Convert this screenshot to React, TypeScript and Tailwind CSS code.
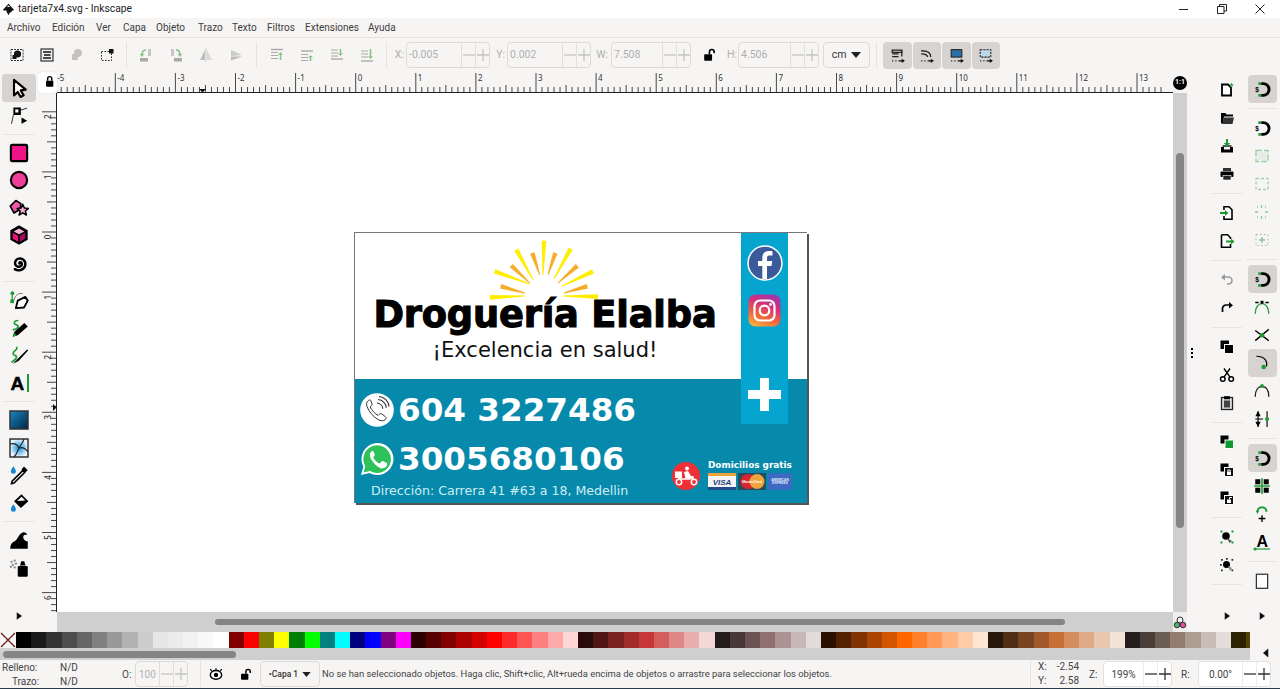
import type { ReactNode } from "react";

const ui = { fontFamily: 'Roboto, "Noto Sans", sans-serif' };
const card = { fontFamily: '"DejaVu Sans", Verdana, sans-serif' };

const swatches = [
  "#000000", "#1a1a1a", "#333333", "#4d4d4d", "#666666", "#808080", "#999999", "#b3b3b3", "#cccccc", "#e6e6e6", "#ececec", "#f2f2f2", "#f9f9f9", "#ffffff",
  "#800000", "#ff0000", "#808000", "#ffff00", "#008000", "#00ff00", "#008080", "#00ffff", "#000080", "#0000ff", "#800080", "#ff00ff",
  "#2b0000", "#550000", "#800000", "#aa0000", "#d40000", "#ff0000", "#ff2a2a", "#ff5555", "#ff8080", "#ffaaaa", "#ffd5d5",
  "#280b0b", "#501616", "#782121", "#a02c2c", "#c83737", "#d35f5f", "#de8787", "#e9afaf", "#f4d7d7",
  "#241c1c", "#483737", "#6c5353", "#916f6f", "#ac9393", "#c8b7b7", "#e3dbdb",
  "#2b1100", "#552200", "#803300", "#aa4400", "#d45500", "#ff6600", "#ff7f2a", "#ff9955", "#ffb380", "#ffccaa", "#ffe6d5",
  "#28170b", "#502d16", "#784421", "#a05a2c", "#c87137", "#d38d5f", "#deaa87", "#e9c6af", "#f4e3d7",
  "#241f1c", "#483e37", "#6c5d53", "#917c6f", "#ac9d93", "#c8beb7", "#e3dedb",
  "#2b2200",
];

const menus = [
  { label: "Archivo", cls: "w-[45px]" },
  { label: "Edición", cls: "w-[44px]" },
  { label: "Ver", cls: "w-[27px]" },
  { label: "Capa", cls: "w-[33px]" },
  { label: "Objeto", cls: "w-[42px]" },
  { label: "Trazo", cls: "w-[34px]" },
  { label: "Texto", cls: "w-[35px]" },
  { label: "Filtros", cls: "w-[38px]" },
  { label: "Extensiones", cls: "w-[63px]" },
  { label: "Ayuda", cls: "w-[40px]" },
];

function Ic({ children, size = 16 }: { children: ReactNode; size?: number }) {
  return (
    <svg width={size} height={size} viewBox="0 0 16 16" className="shrink-0">
      {children}
    </svg>
  );
}

const Arrow = () => (
  <Ic size={12}>
    <path d="M5 3l7 5-7 5z" fill="#111" />
  </Ic>
);

// top toolbar icons
const topIcons = [
  <Ic key="a"><rect x="2" y="2.500" width="12" height="11" fill="#fff" stroke="#333" strokeDasharray="2 1" /><circle cx="8.500" cy="7" r="3.600" fill="#111" /><rect x="3.500" y="8" width="4" height="4" fill="#111" /></Ic>,
  <Ic key="b"><rect x="2" y="2" width="12" height="12" fill="#eee" stroke="#333" strokeWidth="1.200" /><path d="M4 5h8M5 8h6.500M4 11h8" stroke="#111" strokeWidth="1.600" /></Ic>,
  <Ic key="c"><g opacity=".25"><rect x="3" y="7" width="6" height="6" fill="#333" /><circle cx="9" cy="6" r="4" fill="#333" /></g></Ic>,
  <Ic key="d"><rect x="2.500" y="4.500" width="10" height="9" fill="none" stroke="#222" strokeDasharray="1.500 1.500" /><rect x="10" y="2" width="4.500" height="4.500" fill="#111" /></Ic>,
  <Ic key="e"><g opacity=".6"><rect x="2" y="11" width="8" height="3.500" fill="#777" /><rect x="10" y="2" width="3" height="7" fill="#aaa" /><path d="M8 3C5 3 4 5 4 8" fill="none" stroke="#3a9d3a" strokeWidth="1.600" /><path d="M1.800 7h4.400L4 10z" fill="#3a9d3a" /></g></Ic>,
  <Ic key="f"><g opacity=".6"><rect x="6" y="11" width="8" height="3.500" fill="#777" /><rect x="3" y="2" width="3" height="7" fill="#aaa" /><path d="M8 3c3 0 4 2 4 5" fill="none" stroke="#3a9d3a" strokeWidth="1.600" /><path d="M9.800 7h4.400L12 10z" fill="#3a9d3a" /></g></Ic>,
  <Ic key="g"><g opacity=".45"><path d="M7 3v10L2 13z" fill="#777" /><path d="M9 3v10l5 0z" fill="#bbb" /><path d="M8 1v14" stroke="#999" /></g></Ic>,
  <Ic key="h"><g opacity=".45"><path d="M3 3l11 5-11 1z" fill="#999" /><path d="M3 9.500l11 0-11 4z" fill="#777" /></g></Ic>,
  <Ic key="i"><g opacity=".6" fill="none" stroke="#777"><path d="M2 2.500h12" strokeWidth="1.400" /><path d="M2 5.500h7M2 8.500h7M2 11.500h7" /><path d="M11.500 13V6" stroke="#3a9d3a" strokeWidth="1.500" /><path d="M9.500 8l2-2.500 2 2.500" stroke="#3a9d3a" /></g></Ic>,
  <Ic key="j"><g opacity=".6" fill="none" stroke="#777"><path d="M2 4h12" strokeWidth="1.400" /><path d="M2 7.500h7M2 10.500h7M2 13.500h7" /><path d="M11.500 14V9" stroke="#3a9d3a" strokeWidth="1.500" /><path d="M9.500 10.500l2-2 2 2" stroke="#3a9d3a" /></g></Ic>,
  <Ic key="k"><g opacity=".6" fill="none" stroke="#777"><path d="M2 12h12" strokeWidth="1.400" /><path d="M2 3h7M2 6h7M2 9h7" /><path d="M11.500 2v6" stroke="#3a9d3a" strokeWidth="1.500" /><path d="M9.500 6l2 2.500 2-2.500" stroke="#3a9d3a" /></g></Ic>,
  <Ic key="l"><g opacity=".6" fill="none" stroke="#777"><path d="M2 14h12" strokeWidth="1.400" /><path d="M2 4h7M2 7h7M2 10h7" /><path d="M11.500 2v9" stroke="#3a9d3a" strokeWidth="1.500" /><path d="M9.500 9l2 2.500 2-2.500" stroke="#3a9d3a" /></g></Ic>,
];

function Prefs({ kind }: { kind: number }) {
  return (
    <Ic size={17}>
      {kind === 0 && <path d="M3 3h9v2H3zM3 6.500h6M3 9h6" stroke="#222" strokeWidth="1.200" fill="none" />}
      {kind === 0 && <path d="M12 3v6" stroke="#222" strokeWidth="1.200" />}
      {kind === 1 && <path d="M3 3.500c5 0 9 1 9 6M3 6.500c3 0 6 .5 6 3" stroke="#222" strokeWidth="1.300" fill="none" />}
      {kind === 2 && <rect x="3" y="2.500" width="10" height="7" fill="#2a6fa8" stroke="#222" />}
      {kind === 3 && <rect x="3" y="2.500" width="10" height="7" fill="#bcd7e8" stroke="#222" strokeDasharray="2 1" />}
      <path d="M3 13h1M6 13h1M9 13h4" stroke="#111" strokeWidth="1.200" />
      <path d="M12 11l3 2-3 2z" fill="#111" />
    </Ic>
  );
}

function LockIcon({ open = false, size = 14 }: { open?: boolean; size?: number }) {
  return (
    <Ic size={size}>
      <rect x="2.500" y="7" width="9" height="7.500" fill="#000" rx="1" />
      {open ? (
        <path d="M8.500 7V4.500a2.700 2.700 0 0 1 5.400 0V6" fill="none" stroke="#000" strokeWidth="1.800" />
      ) : (
        <path d="M4.500 7V4.500a2.500 2.500 0 0 1 5 0V7" fill="none" stroke="#000" strokeWidth="1.800" />
      )}
    </Ic>
  );
}

// left tools
const T = 20;
const tools: (ReactNode | null)[] = [
  <Ic key="sel" size={T}><path d="M4 1.500v12.500l3-2.800 2.300 4 2.400-1.300-2.300-4 4-.6z" fill="#fff" stroke="#000" strokeWidth="1.700" strokeLinejoin="round" /></Ic>,
  <Ic key="node" size={T}><rect x="3.500" y="2" width="6" height="6" fill="#000" /><rect x="5" y="3.500" width="2.500" height="2.500" fill="#fff" /><path d="M3.500 8L2 15M9.500 4l5-1.500" stroke="#333" fill="none" strokeWidth=".8" /><path d="M10 10l4.500 2.500-4.500 2.500z" fill="#000" /></Ic>,
  null,
  <Ic key="rect" size={T}><rect x="1.500" y="1.500" width="13" height="13" rx="1" fill="#ed1285" stroke="#000" strokeWidth="1.700" /></Ic>,
  <Ic key="circ" size={T}><circle cx="8" cy="8" r="6.500" fill="#ee3f98" stroke="#000" strokeWidth="1.700" /></Ic>,
  <Ic key="star" size={T}><path d="M1 6.500L5.500 2 9.500 4.500 9 9 4 12z" fill="#ee5aa5" stroke="#000" strokeWidth="1.300" strokeLinejoin="round" /><path d="M11 5l1.300 3 3.200.3-2.400 2.100.8 3.200-2.900-1.700-2.900 1.700.8-3.200-2.400-2.100 3.200-.3z" fill="#f3a7cf" stroke="#000" strokeWidth="1.200" strokeLinejoin="round" /></Ic>,
  <Ic key="box" size={T}><path d="M8 1l6.300 3.500v7L8 15l-6.300-3.500v-7z" fill="#000" stroke="#000" strokeWidth="1.300" strokeLinejoin="round" /><path d="M8 2.800l4.300 2.300L8 7.400 3.700 5.100z" fill="#f7b4d4" /><path d="M3 6.200l4.300 2.400v4.700L3 10.900z" fill="#e7127f" /><path d="M13 6.200L8.700 8.600v4.700l4.300-2.400z" fill="#a30c5b" /></Ic>,
  <Ic key="spiral" size={T}><path d="M8.300 8.500c-.5-1.300 1.700-1.600 2 0 .3 2-2.400 3.300-4.200 2-2.300-1.700-1.200-5.400 1.600-6 3.300-.7 6 2 5.300 5.400-.8 3.400-5 5-8.400 3" fill="none" stroke="#000" strokeWidth="1.900" strokeLinecap="round" /></Ic>,
  null,
  <Ic key="pen" size={T}><rect x="1" y="7.500" width="3" height="3" fill="#1c9a35" /><circle cx="2.700" cy="2.500" r="1.500" fill="#1c9a35" /><path d="M2.600 3v5" stroke="#1c9a35" /><path d="M4 8C5 4 8 2 11 3" fill="none" stroke="#777" strokeWidth=".8" /><path d="M5.500 14.500l1.500-6 6-3 2 3-3 5.500z" fill="#fff" stroke="#000" strokeWidth="1.500" strokeLinejoin="round" /></Ic>,
  <Ic key="pencil" size={T}><path d="M7.500 2C4 2 3 4.500 6 5.500S7 9 3 9.500" fill="none" stroke="#1c9a35" strokeWidth="1.300" /><path d="M3 15l1.300-4 8-7 2.700 2.800-8 7z" fill="#000" /><path d="M3 15l1-3.300 2.300 2.200z" fill="#1c9a35" /></Ic>,
  <Ic key="call" size={T}><path d="M6 1.500C8 4 2 5 3.500 7.500c1 1.500 3 .5 2.500 2.500-.3 1.500-3 3-4 4" fill="none" stroke="#1c9a35" strokeWidth="1.300" /><path d="M6 12L14.500 3.500l.8.8L7.500 13z" fill="#000" /><path d="M3 15l3-3.500 1.500 1.500z" fill="#222" /></Ic>,
  <svg key="text" width={T} height={T} viewBox="0 0 20 20" className="shrink-0"><text x="1.500" y="16.500" fontSize="19" fontWeight="700" fontFamily="Liberation Sans, sans-serif" fill="#000" stroke="#000" strokeWidth=".5">A</text><rect x="18" y="1" width="2" height="18" fill="#1c9a35" /></svg>,
  null,
  <svg key="grad" width={T} height={T} viewBox="0 0 20 20" className="shrink-0"><defs><linearGradient id="tg" x1="0" y1="0" x2="1" y2="1"><stop offset="0" stopColor="#1788c8" /><stop offset="1" stopColor="#02223f" /></linearGradient></defs><rect x="1" y="1" width="18" height="18" fill="url(#tg)" stroke="#333" strokeWidth="1.500" /></svg>,
  <svg key="mesh" width={T} height={T} viewBox="0 0 20 20" className="shrink-0"><defs><radialGradient id="mg"><stop offset="0" stopColor="#0f8fd6" /><stop offset="1" stopColor="#e8f3fa" /></radialGradient></defs><rect x="1" y="1" width="18" height="18" fill="url(#mg)" stroke="#333" strokeWidth="1.500" /><path d="M10 10C8 6 6 5 1 6M10 10c2-4 4-5 5-9M10 10c4-1 6 0 9 4M10 10c-2 4-2 6-5 9" fill="none" stroke="#222" strokeWidth="1.100" /></svg>,
  <Ic key="drop" size={T}><path d="M3.500 1c1.200 1.700 2 2.800 2 4a2 2 0 0 1-4 0c0-1.200.8-2.300 2-4z" fill="#1b86d0" /><path d="M11 4.500L2.500 13l-.5 2 2-.5L12.500 6z" fill="#fff" stroke="#000" strokeWidth="1.300" /><path d="M10 3.500l2-2.300 3 3-2.300 2z" fill="#000" /></Ic>,
  <Ic key="fill" size={T}><path d="M3.500 9c1.200 1.700 2 2.800 2 4a2 2 0 0 1-4 0c0-1.200.8-2.300 2-4z" fill="#1b86d0" /><path d="M10 1l5.500 5.500-6 5.500L4 6.500z" fill="#000" /><path d="M6.500 6.300L10 3l3 3z" fill="#fff" /></Ic>,
  null,
  <Ic key="tweak" size={T}><path d="M1 15c0-3 1-5 3.500-6 2.500-1 3-6 6.500-7 2-.5 3 .5 3.500 2-2.500-.8-3.500.5-3 2.500.4 1.500 2 2.500 3.500 2.500v6z" fill="#000" /></Ic>,
  <Ic key="spray" size={T}><rect x="7" y="6.400" width="8" height="8.600" fill="#000" rx="1" /><path d="M8.800 6l1-3.500h2.400l1 3.500z" fill="#000" /><g fill="#888"><circle cx="2" cy="3" r=".9" /><circle cx="4.500" cy="2" r=".9" /><circle cx="5.500" cy="4.500" r=".9" /><circle cx="3" cy="5.500" r=".9" /><circle cx="1.500" cy="7" r=".9" /><circle cx="4.500" cy="7.500" r=".9" /></g></Ic>,
  null,
];

function Snap({ dim = false }: { dim?: boolean }) {
  return (
    <Ic size={21}>
      <g opacity={dim ? 0.4 : 1}>
        <path d="M7 3.500h1.500a4.500 4.500 0 0 1 0 9H7" fill="none" stroke="#000" strokeWidth="2.200" />
        <rect x="4.800" y="2.500" width="2" height="2" fill="#1c9a35" />
        <rect x="4.800" y="11.500" width="2" height="2" fill="#1c9a35" />
        <text x="2.500" y="10.200" fontSize="5" fontWeight="700" fill="#000" fontFamily="Liberation Sans, sans-serif">$</text>
      </g>
    </Ic>
  );
}

const docLeft: (ReactNode | null)[] = [
  <Ic key="new"><path d="M3 2.500h6l3 3v8H3z" fill="#fff" stroke="#000" strokeWidth="1.800" /><path d="M12.500 .5l.7 1.500 1.600.3-1.200 1 .3 1.700-1.400-.8-1.400.8.3-1.700-1.200-1 1.600-.3z" fill="#2fb24c" /></Ic>,
  <Ic key="open"><path d="M2 3h4.500l1 1.500H14v2H5l-1 7H2z" fill="#000" /><path d="M4.800 7.500H15l-1.500 6.500H3.500z" fill="#333" /></Ic>,
  <Ic key="save"><path d="M2 9h3v2.500h6V9h3v5.500H2z" fill="#000" /><path d="M3.500 7h9v2h-9z" fill="#555" /><path d="M7 1h2v4h2.300L8 8.500 4.700 5H7z" fill="#1c9a35" /></Ic>,
  <Ic key="print"><rect x="4" y="2" width="8" height="3" fill="#333" /><rect x="1.500" y="5.500" width="13" height="5.500" fill="#000" rx="1" /><rect x="4" y="9.500" width="8" height="4.500" fill="#222" stroke="#fff" strokeWidth=".6" /></Ic>,
  null,
  <Ic key="imp"><path d="M5 5V1.800h5l3 3v9.400H5V11" fill="#fff" stroke="#000" strokeWidth="1.600" /><path d="M1 7h5V5l3.500 3L6 11V9H1z" fill="#1c9a35" /></Ic>,
  <Ic key="exp"><path d="M2.500 1.800h6l3 3V6M11.500 11v3.200h-9V1.800" fill="#fff" stroke="#000" strokeWidth="1.600" /><path d="M7 7.500h5V5.500l3.500 3-3.500 3V9.500H7z" fill="#1c9a35" /></Ic>,
  null,
  <Ic key="undo"><path d="M5 5h4.500a3.500 3.500 0 0 1 0 7H8" fill="none" stroke="#999" strokeWidth="1.600" /><path d="M6 2L2 5.200 6 8.500z" fill="#999" /></Ic>,
  <Ic key="redo"><path d="M11 5H7a3.500 3.500 0 0 0-3.500 3.500V12" fill="none" stroke="#000" strokeWidth="1.700" /><path d="M10 2l4 3.200-4 3.300z" fill="#000" /></Ic>,
  null,
  <Ic key="dup"><rect x="1.500" y="1.500" width="8.500" height="8.500" fill="#000" /><rect x="5.500" y="5.500" width="9" height="9" fill="#000" stroke="#fff" /></Ic>,
  <Ic key="cut"><circle cx="3.800" cy="12" r="2.300" fill="#fff" stroke="#000" strokeWidth="1.500" /><circle cx="12.200" cy="12" r="2.300" fill="#fff" stroke="#000" strokeWidth="1.500" /><path d="M5 10.200L11 1.500M11 10.200L5 1.500" stroke="#000" strokeWidth="1.400" /></Ic>,
  <Ic key="paste"><rect x="2.500" y="2.500" width="11" height="12" fill="#ddd" stroke="#222" strokeWidth="1.300" /><rect x="5" y="1.200" width="6" height="3" fill="#000" /><rect x="5" y="5.500" width="6" height="7" fill="#444" /></Ic>,
  null,
  <Ic key="clone"><rect x="1.500" y="1.500" width="8" height="8" fill="#000" /><rect x="6" y="6" width="8.500" height="8.500" fill="#0f9a2f" stroke="#fff" /></Ic>,
  <Ic key="unlink"><rect x="1.500" y="1.500" width="8" height="8" fill="#000" /><rect x="5.500" y="5.500" width="9" height="9" fill="#111" stroke="#fff" /><rect x="8" y="9.500" width="4" height="3.500" fill="#fff" /><path d="M8.800 9.500V8h2.400v1.500" stroke="#fff" fill="none" /></Ic>,
  <Ic key="relink"><rect x="1.500" y="1.500" width="8" height="8" fill="#000" /><rect x="5.500" y="5.500" width="9" height="9" fill="#111" stroke="#fff" /><rect x="8" y="9.500" width="4" height="3.500" fill="#fff" /><path d="M10.500 9.500V7.500h2.400" stroke="#fff" fill="none" /></Ic>,
  null,
  <Ic key="grp"><circle cx="7" cy="7" r="3.800" fill="#000" /><path d="M8 9l5 3-2.500 2z" fill="#555" /><g fill="#1c9a35"><rect x="1.500" y="1.500" width="2" height="2" /><rect x="12.500" y="1.500" width="2" height="2" /><rect x="1.500" y="12.500" width="2" height="2" /><rect x="12.500" y="12.500" width="2" height="2" /></g></Ic>,
  <Ic key="ungrp"><circle cx="7.500" cy="7.500" r="3.500" fill="#000" /><path d="M9 9l4 2-2 3z" fill="#888" /><g fill="#222"><rect x="2" y="2" width="1.700" height="1.700" /><rect x="12.500" y="2" width="1.700" height="1.700" /><rect x="2" y="12.500" width="1.700" height="1.700" /><rect x="12.500" y="12.500" width="1.700" height="1.700" /><rect x="7" y="1" width="1.700" height="1.700" /><rect x="1" y="7" width="1.700" height="1.700" /></g></Ic>,
  null,
];

const dash = { fill: "none", stroke: "#2e9c46", strokeWidth: 1.3 };
const snapRight: ({ el: ReactNode; on?: boolean } | null)[] = [
  { el: <Snap />, on: true },
  null,
  { el: <Snap /> },
  { el: <Ic><rect x="2" y="2.500" width="12" height="11" {...dash} strokeDasharray="6 2" opacity=".45" /><rect x="3.500" y="4" width="9" height="8" fill="#2e9c46" opacity=".08" /></Ic> },
  { el: <Ic><rect x="2" y="2.500" width="12" height="11" {...dash} strokeDasharray="3 2" opacity=".4" /></Ic> },
  { el: <Ic><path d="M7.500 1v3M7.500 12v3M1 8h3M11 8h3M3 3h1M11 3h1M3 13h1M11 13h1" {...dash} opacity=".5" /></Ic> },
  { el: <Ic><rect x="2" y="2.500" width="12" height="11" fill="none" stroke="#888" strokeDasharray="2 2" opacity=".5" /><path d="M8 5v6M5 8h6" {...dash} opacity=".55" /></Ic> },
  null,
  { el: <Snap />, on: true },
  { el: <Ic size={18}><path d="M2 14C2 8 5 5 8 5s6 3 6 9" fill="none" stroke="#2e9c46" strokeWidth="1.300" /><rect x="6.700" y="2.500" width="2.600" height="2.600" fill="#000" /><path d="M2 4h3M14 4h-3" stroke="#000" strokeWidth="1.500" /></Ic> },
  { el: <Ic size={18}><path d="M2 13L14 3M2 4l12 9" stroke="#000" strokeWidth="1.200" /><circle cx="8" cy="8.300" r="2" fill="#1c9a35" /></Ic> },
  { el: <Ic size={18}><path d="M3 2c7 0 10 4 9 9" fill="none" stroke="#000" strokeWidth="1.100" /><circle cx="9.500" cy="11.500" r="2" fill="#1c9a35" /></Ic>, on: true },
  { el: <Ic size={18}><path d="M2 13C2 7 4.500 4 8 4s6 3 6 9" fill="none" stroke="#222" strokeWidth="1.200" /><circle cx="8" cy="3.500" r="1.700" fill="#1c9a35" /></Ic> },
  { el: <Ic size={18}><path d="M4.500 1v14M12.500 1v14" stroke="#000" strokeWidth="1" /><path d="M2 8h7M3 5l1.500-3L6 5zM3 11l1.500 3L6 11z" fill="#000" stroke="#000" /><circle cx="12.500" cy="8" r="1.800" fill="#1c9a35" /></Ic> },
  null,
  { el: <Snap />, on: true },
  { el: <Ic size={18}><g fill="#000"><rect x="2" y="2" width="4.500" height="4.500" /><rect x="9.500" y="2" width="4.500" height="4.500" /><rect x="2" y="9.500" width="4.500" height="4.500" /><rect x="9.500" y="9.500" width="4.500" height="4.500" /></g><path d="M8 1v14M1 8h14" stroke="#1c9a35" strokeWidth="1.400" /></Ic> },
  { el: <Ic size={18}><path d="M8 9v6M5 12h6" stroke="#000" strokeWidth="1.200" /><path d="M4 6a4 4 0 0 1 8 0" fill="none" stroke="#1c9a35" strokeWidth="1.800" /><path d="M2.500 5h3l-1.500 3z" fill="#1c9a35" /></Ic> },
  { el: <svg width="20" height="20" viewBox="0 0 20 20" className="shrink-0"><text x="4.500" y="14.500" fontSize="16" fontWeight="700" fontFamily="Liberation Sans, sans-serif" fill="#000">A</text><path d="M2 17h16" stroke="#1c9a35" strokeWidth="1.200" /><circle cx="3" cy="17" r="1.600" fill="#1c9a35" /></svg> },
  null,
  { el: <Ic size={18}><rect x="3" y="2" width="10" height="12.500" fill="#fff" stroke="#333" strokeWidth="1.100" /></Ic> },
];

function Sep() {
  return <div className="h-px w-full bg-[#e6e4e2]" />;
}

function Mini({ dark = false }: { dark?: boolean }) {
  const c = dark ? "#333" : "#c4c3c1";
  return (
    <div className="flex h-full shrink-0 items-center">
      <div className={`flex h-full w-[14px] items-center justify-center border-l ${dark ? "border-[#ececec]" : "border-[#e1dfdd]"}`}>
        <svg width="12" height="12" viewBox="0 0 12 12"><path d="M0 6h12" stroke={c} strokeWidth="1.300" /></svg>
      </div>
      <div className={`flex h-full w-[14px] items-center justify-center border-l ${dark ? "border-[#ececec]" : "border-[#e1dfdd]"}`}>
        <svg width="12" height="12" viewBox="0 0 12 12"><path d="M0 6h12M6 0v12" stroke={c} strokeWidth="1.300" /></svg>
      </div>
    </div>
  );
}

function Spin({ value, cls }: { value: string; cls: string }) {
  return (
    <div className={`flex h-[26px] shrink-0 items-center rounded-[4px] border border-[#dddbd9] bg-[#f6f5f4] ${cls}`}>
      <span className="flex-1 pl-[2px] text-[10.5px] text-[#b0afae]">{value}</span>
      <Mini />
    </div>
  );
}

function HRuler() {
  const ticks: ReactNode[] = [];
  const w = 1116;
  const labels: ReactNode[] = [];
  for (let i = -50; i <= 140; i++) {
    const x = 298.7 + i * 6.01;
    if (x < -3 || x > w - 6) continue;
    const major = i % 10 === 0;
    const mid = i % 5 === 0;
    const top = major ? 1 : mid ? 13 : 15;
    ticks.push(<line key={i} x1={x} x2={x} y1={top} y2={20} stroke="#333" strokeWidth=".9" />);
    if (major) {
      labels.push(
        <text key={`l${i}`} x={x + 2} y={9} fontSize="8" fill="#333" fontFamily="Noto Sans, sans-serif">
          {i / 10}
        </text>,
      );
    }
  }
  return (
    <svg width={w} height={21} className="shrink-0">
      {ticks}
      {labels}
      <line x1="0" x2={w} y1="20.500" y2="20.500" stroke="#222" />
      <path d="M142 17h7l-3.500 3.500z" fill="#111" />
    </svg>
  );
}

function VRuler() {
  const ticks: ReactNode[] = [];
  const labels: ReactNode[] = [];
  for (let i = -20; i <= 85; i++) {
    const y = 139 + i * 6.01;
    if (y < 0 || y > 519) continue;
    const major = i % 10 === 0;
    const mid = i % 5 === 0;
    const left = major ? 4 : mid ? 9 : 13;
    ticks.push(<line key={i} x1={left} x2={19} y1={y} y2={y} stroke="#333" strokeWidth=".9" />);
    if (major) {
      const v = Math.abs(i / 10);
      labels.push(
        <text key={`l${i}`} x={11} y={y + 7} fontSize="8" fontWeight="500" textAnchor="middle" fill="#333" fontFamily="Noto Sans, sans-serif" transform={`rotate(-90 11 ${y + 5})`}>
          {v}
        </text>,
      );
    }
  }
  return (
    <svg width={19} height={519} className="shrink-0">
      {ticks}
      {labels}
      <line x1="18.500" x2="18.500" y1="0" y2="519" stroke="#222" />
      <path d="M15 311v7l3.500-3.500z" fill="#111" />
    </svg>
  );
}

const rays = [
  { a: [588, 48], b: [585, 150], c: "#ffee00" },
  { a: [505, 75], b: [555, 165], c: "#ffee00" },
  { a: [668, 72], b: [618, 162], c: "#ffee00" },
  { a: [440, 140], b: [545, 178], c: "#ffee00" },
  { a: [735, 140], b: [640, 185], c: "#ffee00" },
  { a: [425, 218], b: [530, 214], c: "#ffee00" },
  { a: [750, 216], b: [645, 214], c: "#ffee00" },
  { a: [553, 85], b: [575, 150], c: "#f5ad27" },
  { a: [622, 85], b: [600, 150], c: "#f5ad27" },
  { a: [490, 123], b: [545, 175], c: "#f5ad27" },
  { a: [688, 123], b: [630, 175], c: "#f5ad27" },
  { a: [458, 185], b: [530, 205], c: "#f5ad27" },
  { a: [718, 185], b: [648, 205], c: "#f5ad27" },
];

function rayPoints(a: number[], b: number[]) {
  const dx = b[0] - a[0];
  const dy = b[1] - a[1];
  const len = Math.hypot(dx, dy);
  const nx = -dy / len;
  const ny = dx / len;
  return [
    [a[0] + nx * 7, a[1] + ny * 7],
    [a[0] - nx * 7, a[1] - ny * 7],
    [b[0] - nx * 1.500, b[1] - ny * 1.500],
    [b[0] + nx * 1.500, b[1] + ny * 1.500],
  ]
    .map((p) => p.join(","))
    .join(" ");
}

function Sun() {
  return (
    <svg width="114" height="64" viewBox="420 40 342 192" className="shrink-0">
      {rays.map((r, i) => (
        <polygon key={i} points={rayPoints(r.a, r.b)} fill={r.c} />
      ))}
    </svg>
  );
}

function Facebook() {
  return (
    <svg width="36" height="36" viewBox="0 0 36 36" className="shrink-0">
      <circle cx="18" cy="18" r="17" fill="#3b5a9a" stroke="#fff" strokeWidth="1.500" />
      <path d="M20 34V21h4.500l.7-5H20v-3c0-1.500.5-2.500 2.500-2.500h3V6.200C24.500 6 23 6 22 6c-4 0-6.700 2.400-6.700 6.700V16H11v5h4.300v13z" fill="#fff" />
    </svg>
  );
}

function Instagram() {
  return (
    <svg width="33" height="33" viewBox="0 0 33 33" className="shrink-0">
      <defs>
        <linearGradient id="ig" x1="0.200" y1="1" x2="0.600" y2="0">
          <stop offset="0" stopColor="#fbb03b" />
          <stop offset="0.350" stopColor="#f0643c" />
          <stop offset="0.700" stopColor="#d62f7d" />
          <stop offset="1" stopColor="#a336a5" />
        </linearGradient>
      </defs>
      <rect x="0.500" y="0.500" width="32" height="32" rx="7" fill="url(#ig)" />
      <rect x="6.500" y="6.500" width="20" height="20" rx="5.500" fill="none" stroke="#fff" strokeWidth="2.200" />
      <circle cx="16.500" cy="16.500" r="4.800" fill="none" stroke="#fff" strokeWidth="2.200" />
      <circle cx="22.500" cy="10.500" r="1.400" fill="#fff" />
    </svg>
  );
}

function PhoneBadge() {
  return (
    <svg width="34" height="34" viewBox="0 0 34 34" className="shrink-0">
      <circle cx="17" cy="17" r="16.800" fill="#fff" />
      <path d="M8.500 7.500c-2 1.500-2.500 3.500-1.500 6 2 5.500 6 10 11 13 2.500 1.500 5 1.800 7 .3 1.200-1 1.500-2 .5-3l-3.500-2.700c-1-.7-2-.6-2.800.3l-1 1c-3.500-1.700-6.500-5-8-8.500l1.200-1c.9-.8.9-1.700.3-2.700L10.800 7.500c-.7-.8-1.500-.7-2.300 0z" fill="#fff" stroke="#333" strokeWidth="1" />
      <path d="M17 10c3 .2 5.500 2.700 5.800 5.800M18 6.500c4.500.3 8 3.800 8.300 8.300M19 3.500c5.200.4 9.700 4.600 10 10" fill="none" stroke="#333" strokeWidth="1.100" />
    </svg>
  );
}

function WhatsApp() {
  return (
    <svg width="34" height="34" viewBox="0 0 34 34" className="shrink-0">
      <path d="M1 33l2.400-8.300A16 16 0 1 1 9.600 31z" fill="#fff" />
      <path d="M3.500 30.500l1.800-6.200A13.800 13.800 0 1 1 10 29z" fill="#2fc15a" />
      <path d="M12.500 9c-1 .1-2.600 1.500-2.600 4 0 2.600 1.900 5.200 2.200 5.600.3.400 3.700 6 9.100 8 1.300 0 .9-.1 2.500-.5 1.500-.3 3-1.500 3.300-2.800.2-.9.2-1.800 0-2-.1-.3-3.900-2.200-4.300-2.300-.4-.1-.7-.2-1 .2l-1.600 1.900c-.3.400-.6.400-1 .2-1.800-.9-3-1.600-4.200-3.300-.8-1.100-1.300-1.900-1.500-2.300-.2-.4 0-.6.200-.8l1-1.300c.2-.3.3-.6.100-1l-1.300-3.300c-.4-.7-.6-.5-.9-.5z" fill="#fff" />
    </svg>
  );
}

function Delivery() {
  return (
    <svg width="28" height="28" viewBox="0 0 28 28" className="shrink-0">
      <circle cx="14" cy="14" r="14" fill="#ee3036" />
      <rect x="3" y="9.500" width="7" height="6.500" fill="#fff" />
      <circle cx="15" cy="6.500" r="2" fill="#fff" />
      <path d="M12 10l4-1 3 5 3 .5-.5 2h-8z" fill="#fff" />
      <circle cx="7" cy="20" r="2.700" fill="none" stroke="#fff" strokeWidth="1.500" />
      <circle cx="22" cy="20" r="2.700" fill="none" stroke="#fff" strokeWidth="1.500" />
      <path d="M6 17h12l2-2 1 2" fill="none" stroke="#fff" strokeWidth="1.500" />
    </svg>
  );
}

function Visa() {
  return (
    <svg width="28" height="17" viewBox="0 0 28 17" className="shrink-0">
      <rect width="28" height="17" fill="#f4f4f4" />
      <rect width="28" height="3" fill="#e8a33a" />
      <rect y="14" width="28" height="3" fill="#1f4c86" />
      <text x="14" y="12" textAnchor="middle" fontSize="8" fontWeight="700" fontStyle="italic" fill="#1f3f7a" fontFamily="Liberation Sans, sans-serif">VISA</text>
    </svg>
  );
}

function Master() {
  return (
    <svg width="28" height="17" viewBox="0 0 28 17" className="shrink-0">
      <rect width="28" height="17" fill="#2b4a5e" />
      <circle cx="10" cy="8.500" r="7.500" fill="#d9252f" />
      <circle cx="19" cy="8.500" r="7.500" fill="#f0a33a" />
      <text x="14" y="10" textAnchor="middle" fontSize="3.600" fontWeight="700" fontStyle="italic" fill="#fff" fontFamily="Liberation Sans, sans-serif">MasterCard</text>
    </svg>
  );
}

function Amex() {
  return (
    <svg width="24" height="17" viewBox="0 0 25 17" className="shrink-0">
      <rect width="25" height="17" fill="#3f6ac4" />
      <text x="12.500" y="7.500" textAnchor="middle" fontSize="3.400" fontWeight="700" fill="#e4ecfa" fontFamily="Liberation Sans, sans-serif">AMERICAN</text>
      <text x="12.500" y="11.500" textAnchor="middle" fontSize="3.400" fontWeight="700" fill="#e4ecfa" fontFamily="Liberation Sans, sans-serif">EXPRESS</text>
    </svg>
  );
}

function BusinessCard() {
  return (
    <div className="relative flex h-[271px] w-[453px] flex-col border-l border-t border-[#777] shadow-[2px_2px_0_#555]" style={card}>
      <div className="flex h-[146px] w-[380px] shrink-0 flex-col items-center bg-white pt-[5px]">
        <Sun />
        <div className="-mt-[6px] text-[36.8px] leading-[38px] font-bold tracking-[-0.2px] whitespace-nowrap text-black [-webkit-text-stroke:1.1px_black]">
          Droguería Elalba
        </div>
        <div className="mt-[3px] text-[21px] leading-[26px] whitespace-nowrap text-[#111]">¡Excelencia en salud!</div>
      </div>
      <div className="absolute top-0 right-0 left-[380px] h-[146px] bg-white" />
      <div className="flex flex-1 justify-between bg-[#0789ab] pr-[15px] pl-[5px]">
        <div className="flex flex-col">
          <div className="mt-[14px] flex h-[34px] items-center gap-[4px]">
            <PhoneBadge />
            <span className="text-[32.6px] leading-none font-bold whitespace-nowrap text-white">604 3227486</span>
          </div>
          <div className="mt-[15px] flex h-[34px] items-center gap-[4px]">
            <WhatsApp />
            <span className="text-[32.6px] leading-none font-bold whitespace-nowrap text-white">3005680106</span>
          </div>
          <div className="mt-[6px] pl-[11px] text-[12.6px] leading-[18px] whitespace-nowrap text-[#cdeef6]">
            Dirección: Carrera 41 #63 a 18, Medellin
          </div>
        </div>
        <div className="flex items-end gap-[8px] pb-[13px]">
          <Delivery />
          <div className="flex flex-col items-start">
            <div className="text-[8.9px] leading-[14px] font-bold whitespace-nowrap text-white">Domicilios gratis</div>
            <div className="mt-[1px] flex gap-[2px]">
              <Visa />
              <Master />
              <Amex />
            </div>
          </div>
        </div>
      </div>
      <div className="absolute top-0 left-[386px] flex h-[191px] w-[47px] flex-col items-center bg-[#05a5cf] pt-[12px]">
        <Facebook />
        <div className="mt-[13px]">
          <Instagram />
        </div>
        <svg width="33" height="33" viewBox="0 0 33 33" className="mt-[51px] shrink-0">
          <path d="M12 0h9v12h12v9H21v12h-9V21H0v-9h12z" fill="#fff" />
        </svg>
      </div>
    </div>
  );
}

export default function App() {
  return (
    <div className="flex h-[689px] w-[1280px] flex-col overflow-hidden bg-[#f6f5f4]" style={ui}>
      {/* title bar */}
      <div className="flex h-[18px] shrink-0 items-center bg-white pl-[2px] text-[10.3px] text-[#222]">
        <svg width="13" height="13" viewBox="0 0 16 16" className="shrink-0">
          <path d="M8 1L1 8.500l2.500 1 1.500-1 1 3 2 3.500 1.500-3 2-1 1-1.500 2.500-1z" fill="#111" />
          <path d="M6 5h4L8 3z" fill="#fff" />
        </svg>
        <span className="ml-[3px]">tarjeta7x4.svg - Inkscape</span>
        <div className="ml-auto flex items-center">
          <svg width="12" height="12" viewBox="0 0 12 12" className="mr-[26px]"><path d="M1 6.500h9" stroke="#222" /></svg>
          <svg width="12" height="12" viewBox="0 0 12 12" className="mr-[26px]"><path d="M1.500 3.500h6.500v7H1.500zM3.500 3.500v-2h7v6.500H8" fill="none" stroke="#222" /></svg>
          <svg width="12" height="12" viewBox="0 0 12 12" className="mr-[14px]"><path d="M1.500 1.500l9 9M10.500 1.500l-9 9" stroke="#222" /></svg>
        </div>
      </div>

      {/* menu */}
      <div className="flex h-[20px] shrink-0 items-center border-b border-[#e4e2e0] pl-[7px] text-[10px] text-[#3c3c3c]">
        {menus.map((m) => (
          <span key={m.label} className={m.cls}>
            {m.label}
          </span>
        ))}
      </div>

      {/* command bar */}
      <div className="flex h-[34px] shrink-0 items-center pl-[2px] text-[10.5px]">
        {topIcons.slice(0, 4).map((ic, i) => (
          <div key={i} className="flex w-[30px] justify-center">{ic}</div>
        ))}
        <div className="mx-[4px] h-[26px] w-px shrink-0 bg-[#e6e4e2]" />
        {topIcons.slice(4, 8).map((ic, i) => (
          <div key={i} className="flex w-[30px] justify-center">{ic}</div>
        ))}
        <div className="mx-[5px] h-[26px] w-px shrink-0 bg-[#e6e4e2]" />
        {topIcons.slice(8, 12).map((ic, i) => (
          <div key={i} className="flex w-[30px] justify-center">{ic}</div>
        ))}
        <div className="mx-[4px] h-[26px] w-px shrink-0 bg-[#e6e4e2]" />
        <span className="w-[15px] pr-[2px] text-right text-[#b0afae]">X:</span>
        <Spin value="-0.005" cls="w-[84px]" />
        <span className="w-[17px] pr-[2px] text-right text-[#b0afae]">Y:</span>
        <Spin value="0.002" cls="w-[84px]" />
        <span className="w-[20px] pr-[3px] text-right text-[#b0afae]">W:</span>
        <Spin value="7.508" cls="w-[80px]" />
        <div className="flex w-[36px] justify-center">
          <LockIcon open />
        </div>
        <span className="w-[11px] text-[#b0afae]">H:</span>
        <Spin value="4.506" cls="w-[81px]" />
        <div className="ml-[4px] flex h-[26px] w-[47px] shrink-0 items-center justify-center gap-[5px] rounded-[4px] border border-[#dddbd9] text-[#333]">
          cm
          <svg width="10" height="6" viewBox="0 0 10 6"><path d="M0 0h10L5 6z" fill="#222" /></svg>
        </div>
        <div className="mx-[6px] h-[26px] w-px shrink-0 bg-[#e6e4e2]" />
        <div className="flex gap-px">
          {[0, 1, 2, 3].map((k) => (
            <div key={k} className="flex h-[27px] w-[28.500px] items-center justify-center rounded-[4px] bg-[#d6d3d0]">
              <Prefs kind={k} />
            </div>
          ))}
        </div>
      </div>

      {/* workspace */}
      <div className="flex h-[560px] shrink-0">
        <div className="flex w-[38px] shrink-0 flex-col items-center pt-[2px]">
          {tools.map((t, i) =>
            t ? (
              <div key={i} className={`flex h-[27.5px] w-[34px] shrink-0 items-center justify-center rounded-[4px] ${i === 0 ? "bg-[#d6d3d0]" : ""}`}>
                {t}
              </div>
            ) : (
              i < tools.length - 1 && (
                <div key={i} className="flex h-[10px] w-full shrink-0 items-center px-[4px]">
                  <Sep />
                </div>
              )
            ),
          )}
          <div className="mt-auto mb-[10px]">
            <Arrow />
          </div>
        </div>

        <div className="flex w-[1149px] shrink-0 flex-col">
          <div className="flex h-[21px] shrink-0">
            <div className="flex h-[21px] w-[19px] shrink-0 items-start justify-center rounded-[4px] bg-white pt-[3px] pl-[5px] shadow-[0_0_1px_#bbb]">
              <LockIcon size={13} />
            </div>
            <HRuler />
            <div className="flex w-[14px] shrink-0 items-center justify-center">
              <div className="flex h-[14px] w-[14px] items-center justify-center rounded-full bg-black text-[7px] font-bold text-white">1:1</div>
            </div>
          </div>
          <div className="flex h-[519px] shrink-0">
            <VRuler />
            <div className="w-[1116px] shrink-0 bg-white pt-[139px] pl-[297px]">
              <BusinessCard />
            </div>
            <div className="w-[14px] shrink-0 bg-[#cfcfcf] px-[3px] pt-[60px]">
              <div className="h-[375px] w-[8px] rounded-full bg-[#858585]" />
            </div>
          </div>
          <div className="flex h-[20px] shrink-0">
            <div className="w-[19px] shrink-0" />
            <div className="w-[1116px] shrink-0 bg-[#cfcfcf] pt-[7px] pl-[158px]">
              <div className="h-[6px] w-[850px] rounded-full bg-[#858585]" />
            </div>
            <div className="flex w-[14px] shrink-0 items-center justify-center bg-[#f0efee]">
              <svg width="14" height="14" viewBox="0 0 14 14">
                <circle cx="7" cy="5" r="3" fill="none" stroke="#333" />
                <circle cx="4" cy="10" r="2.800" fill="#4fb06a" stroke="#333" />
                <circle cx="10" cy="10" r="2.800" fill="#e64ca6" stroke="#333" />
              </svg>
            </div>
          </div>
        </div>

        <div className="flex w-[93px] shrink-0">
          <div className="flex w-[22px] shrink-0 flex-col items-center pt-[276px] pr-[12px]">
            <div className="flex flex-col gap-[2px]">
              <div className="h-[2px] w-[2px] bg-black" />
              <div className="h-[2px] w-[2px] bg-black" />
              <div className="h-[2px] w-[2px] bg-black" />
            </div>
          </div>
          <div className="flex w-[36px] shrink-0 flex-col items-center pt-[4px]">
            {docLeft.map((d, i) =>
              d ? (
                <div key={i} className="flex h-[28px] shrink-0 items-center justify-center">
                  {d}
                </div>
              ) : (
                <div key={i} className="flex h-[11px] w-[30px] shrink-0 items-center">
                  <Sep />
                </div>
              ),
            )}
            <div className="mt-auto mb-[10px]">
              <Arrow />
            </div>
          </div>
          <div className="ml-[2px] flex w-[30px] shrink-0 flex-col items-center pt-[3px]">
            {snapRight.map((s, i) =>
              s ? (
                <div key={i} className={`flex h-[28px] w-[29px] shrink-0 items-center justify-center ${s.on ? "rounded-[4px] bg-[#d6d3d0]" : ""}`}>
                  {s.el}
                </div>
              ) : (
                <div key={i} className="flex h-[11px] w-full shrink-0 items-center">
                  <Sep />
                </div>
              ),
            )}
            <div className="mt-auto mb-[10px]">
              <Arrow />
            </div>
          </div>
        </div>
      </div>

      {/* palette */}
      <div className="flex h-[28px] shrink-0">
        <div className="flex w-[1250px] shrink-0 flex-col">
          <div className="flex h-[16px] shrink-0 overflow-hidden">
            <svg width="16" height="16" viewBox="0 0 16 16" className="shrink-0">
              <path d="M1 1l14 14M15 1L1 15" stroke="#6d1a1a" strokeWidth="1.300" />
            </svg>
            {swatches.map((c, i) => (
              <div key={i} className="h-full w-[15.2px] shrink-0" style={{ backgroundColor: c }} />
            ))}
            <div className="h-full w-[4px] shrink-0 bg-[#554400]" />
          </div>
          <div className="h-[12px] shrink-0 bg-[#cfcfcf] pt-[3px] pl-[3px]">
            <div className="h-[7px] w-[233px] rounded-full bg-[#858585]" />
          </div>
        </div>
        <div className="flex flex-1 items-end justify-center pb-[1px] pl-[1px]">
          <svg width="12" height="12" viewBox="0 0 16 16">
            <path d="M11 2L4 8l7 6z" fill="#111" />
          </svg>
        </div>
      </div>

      {/* status bar */}
      <div className="flex h-[29px] shrink-0 items-center border-b border-[#2a3a4a] text-[10px] text-[#444]">
        <div className="relative h-full w-[122px] shrink-0 leading-[14px]">
          <div className="flex pt-px pl-[2px]">
            <span className="w-[58px]">Relleno:</span>
            <span>N/D</span>
          </div>
          <div className="flex pl-[12px]">
            <span className="w-[48px]">Trazo:</span>
            <span>N/D</span>
          </div>
        </div>
        <span className="w-[13px] shrink-0">O:</span>
        <div className="flex h-[26px] w-[53px] shrink-0 items-center rounded-[4px] border border-[#dddbd9]">
          <span className="flex-1 pl-[3px] text-[#b0afae]">100</span>
          <Mini />
        </div>
        <div className="ml-[12px] h-[26px] w-px shrink-0 bg-[#e6e4e2]" />
        <div className="flex w-[30px] shrink-0 justify-center">
          <Ic size={14}>
            <ellipse cx="8" cy="9" rx="6.500" ry="5" fill="#fff" stroke="#000" strokeWidth="1.600" />
            <circle cx="8" cy="9" r="2.500" fill="#000" />
            <path d="M3 4.500L1.500 2.500M8 3.500V1.500M13 4.500l1.500-2" stroke="#000" strokeWidth="1.300" />
          </Ic>
        </div>
        <div className="flex w-[28px] shrink-0 justify-center">
          <LockIcon open size={13} />
        </div>
        <div className="ml-[1px] flex h-[26px] w-[60px] shrink-0 items-center justify-center gap-[4px] rounded-[4px] border border-[#dddbd9] text-[8.5px] font-medium text-[#333]">
          •Capa 1
          <svg width="9" height="5" viewBox="0 0 10 6"><path d="M0 0h10L5 6z" fill="#222" /></svg>
        </div>
        <span className="ml-[2px] w-[708px] shrink-0 truncate text-[9.43px] text-[#444]">
          No se han seleccionado objetos. Haga clic, Shift+clic, Alt+rueda encima de objetos o arrastre para seleccionar los objetos.
        </span>
        <div className="flex h-full w-[50px] shrink-0 flex-col justify-center border-l border-[#e6e4e2] pr-[1px] pl-[7px] text-[10px] leading-[14px]">
          <div className="flex justify-between">
            <span>X:</span>
            <span>-2.54</span>
          </div>
          <div className="flex justify-between">
            <span>Y:</span>
            <span>2.58</span>
          </div>
        </div>
        <span className="w-[23px] shrink-0 pl-[9px]">Z:</span>
        <div className="flex h-[26px] w-[69px] shrink-0 items-center rounded-[4px] border border-[#e4e2e0] bg-white">
          <span className="flex-1 text-center">199%</span>
          <Mini dark />
        </div>
        <span className="w-[26px] shrink-0 pl-[9px]">R:</span>
        <div className="flex h-[26px] w-[73px] shrink-0 items-center rounded-[4px] border border-[#e4e2e0] bg-white">
          <span className="flex-1 text-center">0.00°</span>
          <Mini dark />
        </div>
      </div>
    </div>
  );
}
